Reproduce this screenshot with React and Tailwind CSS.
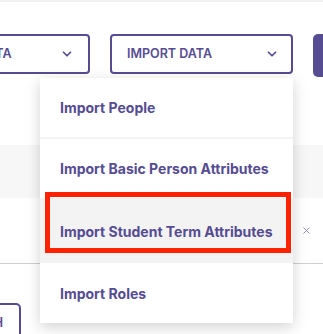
import { ChevronDown, X } from "lucide-react";

const items = [
  "Import People",
  "Import Basic Person Attributes",
  "Import Student Term Attributes",
  "Import Roles",
];

export default function App() {
  return (
    <div className="relative h-[334px] w-[323px] overflow-hidden bg-white font-['Inter',sans-serif] text-[#554c92]">
      {/* header shadow */}
      <div className="h-[2px] bg-[#f1f1f3]" />

      {/* toolbar */}
      <div className="mt-[32px] flex items-start gap-[20px] ml-[-93px]">
        <button className="flex h-[40px] w-[183px] shrink-0 items-center justify-between rounded-[4px] border-2 border-[#554c92] pl-[16px] pr-[14px] text-[12.5px] font-semibold uppercase">
          <span>Export Data</span>
          <ChevronDown size={14} strokeWidth={3} />
        </button>
        <button className="flex h-[40px] w-[183px] shrink-0 items-center justify-between rounded-[4px] border-2 border-[#554c92] pl-[15px] pr-[12px] text-[12.5px] font-semibold uppercase">
          <span>Import Data</span>
          <ChevronDown size={14} strokeWidth={3} />
        </button>
        <div className="h-[43px] w-[60px] shrink-0 rounded-[5px] bg-[#554c92]" />
      </div>

      {/* content behind */}
      <div className="mt-[68px] h-[53px] bg-[#f7f7f8]" />
      <div className="flex h-[66px] items-center justify-end border-b border-[#cfcfd4] pr-[11px]">
        <X size={11} strokeWidth={1.75} className="text-[#7a74aa]" />
      </div>
      <div className="mt-[39px] ml-[-60px] h-[40px] w-[81px] rounded-[5px] border-2 border-[#554c92] flex items-center justify-end pr-[16px] text-[12.5px] font-semibold">
        <span>H</span>
      </div>

      {/* dropdown */}
      <div className="absolute left-[40px] top-[78px] w-[253px] bg-white shadow-[0_4px_14px_rgba(0,0,0,0.18)]">
        {items.map((label, i) => (
          <div
            key={label}
            className={
              i === 2
                ? "flex h-[63px] items-center border-b-2 border-[#f3f3f4] bg-[#f3f3f3] px-[20px] pt-[2px] text-[14px] font-bold"
                : i === 3
                ? "flex h-[60px] items-center px-[20px] text-[14px] font-bold"
                : "flex h-[61px] items-center border-b-2 border-[#f3f3f4] px-[20px] text-[14px] font-bold"
            }
          >
            {label}
          </div>
        ))}
      </div>

      {/* red annotation */}
      <div className="absolute left-[45px] top-[192px] h-[61px] w-[246px] border-[5px] border-[#ff2200]" />
    </div>
  );
}
